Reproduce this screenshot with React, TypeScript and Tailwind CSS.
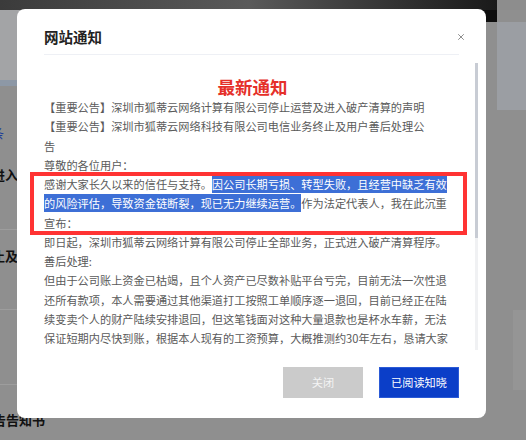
import { X } from 'lucide-react';

const before = [
  '【重要公告】深圳市狐蒂云网络计算有限公司停止运营及进入破产清算的声明',
  '【重要公告】深圳市狐蒂云网络科技有限公司电信业务终止及用户善后处理公',
  '告',
  '尊敬的各位用户：',
];

const after = [
  '宣布：',
  '即日起，深圳市狐蒂云网络计算有限公司停止全部业务，正式进入破产清算程序。',
  '善后处理:',
  '但由于公司账上资金已枯竭，且个人资产已尽数补贴平台亏完，目前无法一次性退',
  '还所有款项，本人需要通过其他渠道打工按照工单顺序逐一退回，目前已经正在陆',
  '续变卖个人的财产陆续安排退回，但这笔钱面对这种大量退款也是杯水车薪，无法',
  '保证短期内尽快到账，根据本人现有的工资预算，大概推测约30年左右，恳请大家',
  '理解与支持，再次向各位用户致以最诚挚的歉意。',
];

function Line({ children }: { children: React.ReactNode }) {
  return <div className="h-[19.25px] leading-[19.25px] whitespace-nowrap">{children}</div>;
}

function BackgroundPage() {
  return (
    <div className="flex flex-col w-full h-full bg-[#8f8f8f]">
      <div className="flex h-[10px] shrink-0">
        <div className="w-[497px] bg-gradient-to-r from-[#3b3b3b] via-[#5a5a5a] to-[#1a1a1a]" />
        <div className="flex-1 bg-[#8d8d8d]" />
      </div>
      <div className="flex flex-1">
        {/* left list column, mostly hidden under the dialog */}
        <div className="w-[240px] flex flex-col font-bold text-[13px] text-[#111]">
          <div className="h-[70px] bg-[#a3a4a6]" />
          <div className="h-[6px] bg-[#8d98a6]" />
          <div className="h-[144px] border-b border-[#9d9d9d] flex flex-col">
            <span className="-ml-[9px] mt-[37px] leading-[20px] text-[13px] font-normal text-[#1f3f99]">条</span>
            <span className="-ml-[8px] mt-[22px] leading-[20px]">进入破产清算</span>
          </div>
          <div className="h-[80px] border-b border-[#9d9d9d] flex flex-col">
            <span className="-ml-[8px] mt-[16px] leading-[20px]">止及用户善后</span>
          </div>
          <div className="h-[75px] border-b border-[#9d9d9d]" />
          <div className="flex flex-col">
            <span className="-ml-[7px] mt-[25px] leading-[20px]">告告知书</span>
          </div>
        </div>
        <div className="flex-1" />
        <div className="w-[66px] flex flex-col">
          <div className="w-[37px] h-[12px] bg-[#0d0d0d]" />
          <div className="ml-[37px] h-[88px] bg-[#9b9ea3]" />
          <div className="ml-[53px] mt-[200px] h-[80px] bg-[#959595]" />
        </div>
      </div>
    </div>
  );
}

function Dialog() {
  return (
    <div className="absolute left-[17px] top-[9px] w-[469px] h-[409px] bg-white rounded-[8px] flex flex-col">
      <div className="mx-[27px] pt-[19px] pb-[8px] border-b border-[#eef0f5] flex items-center justify-between">
        <h2 className="text-[14.5px] leading-[18px] font-bold text-[#222]">网站通知</h2>
        <X size={10} strokeWidth={1.6} className="text-[#555] -mr-[7px]" />
      </div>

      <div className="mt-[8px] h-[287px] flex">
        <div className="flex-1 overflow-hidden pl-[27px] text-[11.2px] text-[#5a5a5a]">
          <div className="pt-[13px] h-[35px] text-center text-[17.5px] leading-[22px] font-bold text-[#e5302a] pr-[14px]">
            最新通知
          </div>
          {before.map((t, i) => (
            <Line key={i}>{t}</Line>
          ))}
          <Line>
            感谢大家长久以来的信任与支持。
            <span className="bg-[#3d6fd6] text-white py-[1px]">因公司长期亏损、转型失败，且经营中缺乏有效</span>
          </Line>
          <Line>
            <span className="bg-[#3d6fd6] text-white py-[1px]">的风险评估，导致资金链断裂，现已无力继续运营。</span>
            作为法定代表人，我在此沉重
          </Line>
          {after.map((t, i) => (
            <Line key={i}>{t}</Line>
          ))}
        </div>
        <div className="w-[3px] mr-[8px] flex flex-col">
          <div className="h-[175px] bg-[#c8ccd4]" />
          <div className="flex-1 bg-[#f0f1f3]" />
        </div>
      </div>

      <div className="mt-[17px] pr-[27px] flex justify-end gap-[16px]">
        <button className="w-[80px] h-[31px] bg-[#cbcbcb] text-[#f4f4f4] text-[11.2px]">关闭</button>
        <button className="w-[80px] h-[31px] bg-[#0b3ec8] border border-[#2b5ad6] text-white text-[11.2px]">已阅读知晓</button>
      </div>
    </div>
  );
}

export default function App() {
  return (
    <div className="relative w-[526px] h-[440px] overflow-hidden font-['Noto_Sans_CJK_SC',sans-serif]">
      <BackgroundPage />
      <Dialog />
      <div className="absolute left-[30px] top-[172px] w-[437px] h-[63px] border-[4px] border-[#ff3333]" />
    </div>
  );
}
